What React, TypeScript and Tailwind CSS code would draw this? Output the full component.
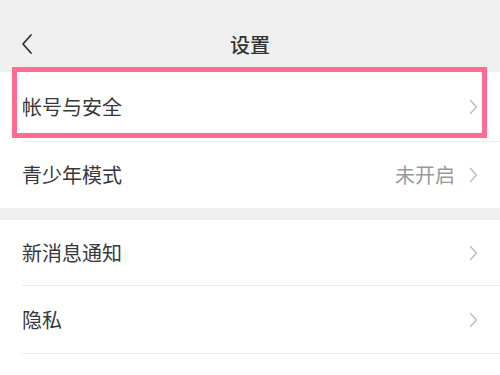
const font = { fontFamily: '"Noto Sans CJK SC", "Noto Sans", sans-serif' };

function Chevron({ className = "" }: { className?: string }) {
  return (
    <svg width="9" height="16" viewBox="0 0 9 16" className={className}>
      <path d="M1.5 1.5 L7.5 8 L1.5 14.5" fill="none" stroke="currentColor" strokeWidth="1.3" strokeLinecap="round" strokeLinejoin="round" />
    </svg>
  );
}

function Row({ label, value, last, h = "h-[67px]" }: { label: string; value?: string; last?: boolean; h?: string }) {
  return (
    <div className="pl-[22px]">
      <div className={`${h} flex items-center pr-[22px] ${last ? "" : "border-b border-[#ececec]"}`}>
        <span className="flex-1 text-[20px] text-[#383838]">{label}</span>
        {value && <span className="text-[20px] text-[#999] mr-[14px]">{value}</span>}
        <Chevron className="text-[#b8b8b8]" />
      </div>
    </div>
  );
}

export default function App() {
  return (
    <div className="w-[500px] h-[375px] overflow-hidden bg-white relative" style={font}>
      <header className="h-[72px] bg-[#efefef] flex items-center px-[20px] relative">
        <svg width="14" height="22" viewBox="0 0 14 22" className="text-[#333] mt-[16px]">
          <path d="M11 2 L3 11 L11 20" fill="none" stroke="currentColor" strokeWidth="1.8" strokeLinecap="round" strokeLinejoin="round" />
        </svg>
        <h1 className="absolute inset-x-0 top-[30px] text-center text-[20px] text-[#333] font-medium">设置</h1>
      </header>

      <Row label="帐号与安全" h="h-[70px]" />
      <Row label="青少年模式" value="未开启" last h="h-[66px]" />
      <div className="h-[12px] bg-[#efefef]" />
      <Row label="新消息通知" h="h-[66px]" />
      <Row label="隐私" h="h-[68px]" />
      <Row label="通用" last />

      <div className="absolute left-[12px] top-[67px] w-[475px] h-[71px] border-[5px] border-[#ff6b93] pointer-events-none" />
    </div>
  );
}
